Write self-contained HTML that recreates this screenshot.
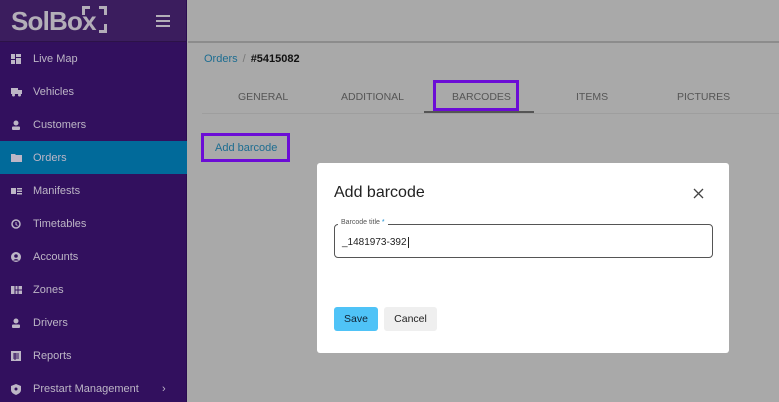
<!DOCTYPE html>
<html><head><meta charset="utf-8">
<style>
*{margin:0;padding:0;box-sizing:border-box}
html,body{width:779px;height:402px;overflow:hidden}
body{font-family:"Liberation Sans",sans-serif;background:#a9a9a9;position:relative}
.sb{position:absolute;left:0;top:0;width:187px;height:402px;background:#32105e;border-right:1px solid #2a0c50}
.hd{height:42px;background:#3b1d5e;border-bottom:1px solid #2c1248;position:relative}
.logo{position:absolute;left:11px;top:8px;font-size:26px;line-height:26px;font-weight:bold;color:#b3aeb8;letter-spacing:-0.8px}
.br{position:absolute;width:8px;height:9px;border-color:#b3aeb8;border-style:solid}
.ham{position:absolute;left:156px;top:15px;width:14px}
.ham i{display:block;height:2px;background:#b3aeb8;margin-bottom:3px}
.it{position:absolute;left:0;width:187px;height:33px;color:#bdb6c6;font-size:11px;line-height:35px;padding-left:33px}
.it svg{position:absolute;left:11px;top:12px}
.act{background:#016a9a}
.main{position:absolute;left:188px;top:0;right:0;bottom:0}
.topline{position:absolute;left:0;right:0;top:41px;height:2px;background:#8c8c8c}
.crumb{position:absolute;left:16px;top:53px;font-size:11px;color:#1d6d91}
.crumb span{color:#777;margin:0 5px}
.crumb b{color:#111}
.tab{position:absolute;top:91px;font-size:10.5px;color:#555}
.tline{position:absolute;left:14px;right:0;top:113px;height:1px;background:#9e9e9e}
.modal{position:absolute;left:317px;top:163px;width:412px;height:190px;background:#fff;border-radius:3px}
</style></head><body>
<div class="sb">
 <div class="hd">
  <div class="logo">SolBox</div>
  <div class="br" style="left:82px;top:6px;border-width:3px 0 0 3px"></div>
  <div class="br" style="left:99px;top:6px;border-width:3px 3px 0 0"></div>
  <div class="br" style="left:99px;top:24px;border-width:0 3px 3px 0"></div>
  <div class="ham"><i></i><i></i><i></i></div>
 </div>
 <div class="it" style="top:42px"><svg width="10" height="10"><rect x="0" y="0" width="4" height="5" fill="#bdb6c6"/><rect x="5" y="0" width="5" height="3" fill="#bdb6c6"/><rect x="0" y="6" width="4" height="4" fill="#bdb6c6"/><rect x="5" y="4" width="5" height="6" fill="#bdb6c6"/></svg>Live Map</div>
 <div class="it" style="top:75px"><svg width="11" height="10"><rect x="0" y="1" width="7" height="6" fill="#bdb6c6"/><rect x="7" y="3" width="4" height="4" fill="#bdb6c6"/><circle cx="2.5" cy="8" r="1.5" fill="#bdb6c6"/><circle cx="8.5" cy="8" r="1.5" fill="#bdb6c6"/></svg>Vehicles</div>
 <div class="it" style="top:108px"><svg width="10" height="10"><circle cx="5" cy="3" r="2.5" fill="#bdb6c6"/><rect x="1" y="6.5" width="8" height="3.5" rx="1" fill="#bdb6c6"/></svg>Customers</div>
 <div class="it act" style="top:141px"><svg width="11" height="10"><path d="M0 1h4l1 1h6v7H0z" fill="#bdb6c6"/></svg>Orders</div>
 <div class="it" style="top:174px"><svg width="11" height="10"><rect x="0" y="2" width="5" height="6" fill="#bdb6c6"/><rect x="6" y="2" width="5" height="1.5" fill="#bdb6c6"/><rect x="6" y="4.5" width="5" height="1.5" fill="#bdb6c6"/><rect x="6" y="7" width="5" height="1.5" fill="#bdb6c6"/></svg>Manifests</div>
 <div class="it" style="top:207px"><svg width="10" height="10"><circle cx="5" cy="5" r="4" fill="none" stroke="#bdb6c6" stroke-width="1.5"/><path d="M5 3v2.5l1.5 1" stroke="#bdb6c6" fill="none"/></svg>Timetables</div>
 <div class="it" style="top:240px"><svg width="10" height="10"><circle cx="5" cy="5" r="5" fill="#bdb6c6"/><circle cx="5" cy="4" r="1.8" fill="#32105e"/><path d="M2 8.5q3-3 6 0" fill="#32105e"/></svg>Accounts</div>
 <div class="it" style="top:273px"><svg width="11" height="10"><rect x="0" y="1" width="11" height="8" fill="#bdb6c6"/><path d="M4 1v8M7 1v8M4 5h7" stroke="#32105e"/></svg>Zones</div>
 <div class="it" style="top:306px"><svg width="10" height="10"><circle cx="5" cy="3" r="2.5" fill="#bdb6c6"/><rect x="1" y="6.5" width="8" height="3.5" rx="1" fill="#bdb6c6"/></svg>Drivers</div>
 <div class="it" style="top:339px"><svg width="10" height="10"><rect x="0" y="0" width="10" height="10" fill="#bdb6c6"/><path d="M2 3h6M2 5h6M2 7h6M4 2v7" stroke="#32105e"/></svg>Reports</div>
 <div class="it" style="top:372px"><svg width="10" height="11"><path d="M5 0l5 2v4q0 3-5 5q-5-2-5-5V2z" fill="#bdb6c6"/><circle cx="5" cy="5" r="1.5" fill="#32105e"/></svg>Prestart Management<span style="position:absolute;left:162px;font-size:11px">›</span></div>
</div>
<div class="main">
 <div class="topline"></div>
 <div class="crumb">Orders<span>/</span><b>#5415082</b></div>
 <div class="tab" style="left:50px">GENERAL</div>
 <div class="tab" style="left:153px">ADDITIONAL</div>
 <div style="position:absolute;left:245px;top:80px;width:86px;height:31px;border:3px solid #6c0cd6"></div>
 <div class="tab" style="left:264px">BARCODES</div>
 <div class="tab" style="left:388px">ITEMS</div>
 <div class="tab" style="left:489px">PICTURES</div>
 <div class="tline"></div>
 <div style="position:absolute;left:236px;top:111px;width:110px;height:2px;background:#555"></div>
 <div style="position:absolute;left:13px;top:133px;width:89px;height:29px;border:3px solid #6c0cd6"></div>
 <div style="position:absolute;left:27px;top:142px;font-size:11px;color:#1d6d91">Add barcode</div>
</div>
<div class="modal">
 <div style="position:absolute;left:17px;top:21px;font-size:16px;color:#222">Add barcode</div>
 <svg style="position:absolute;left:376px;top:25px" width="11" height="11"><path d="M1 1l9 9M10 1l-9 9" stroke="#444" stroke-width="1.3"/></svg>
 <div style="position:absolute;left:17px;top:61px;width:379px;height:34px;border:1.5px solid #555;border-radius:4px"></div>
 <div style="position:absolute;left:21px;top:56px;background:#fff;padding:0 3px;font-size:7px;color:#555">Barcode title <span style="color:#1d8fd0">*</span></div>
 <div style="position:absolute;left:25px;top:74px;font-size:10px;color:#222">_1481973-392<span style="border-left:1px solid #222;margin-left:1px"></span></div>
 <div style="position:absolute;left:17px;top:144px;width:44px;height:24px;background:#4fc3f7;border-radius:3px;font-size:10.5px;line-height:24px;text-align:center;color:#123">Save</div>
 <div style="position:absolute;left:67px;top:144px;width:53px;height:24px;background:#efefef;border-radius:3px;font-size:10.5px;line-height:24px;text-align:center;color:#222">Cancel</div>
</div>
</body></html>
